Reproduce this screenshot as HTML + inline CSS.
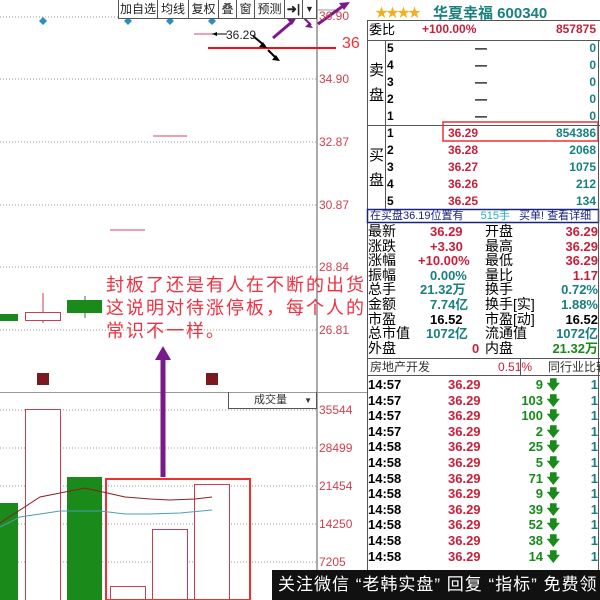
<!DOCTYPE html>
<html><head><meta charset="utf-8"><style>
*{margin:0;padding:0;box-sizing:border-box}
body{width:600px;height:600px;background:#fff;position:relative;overflow:hidden;font-family:"Liberation Sans","Noto Sans CJK SC",sans-serif}
.a{position:absolute;white-space:nowrap}
.btn{position:absolute;top:0;height:19px;border:1px solid #555;border-top:none;font-size:12px;line-height:18px;text-align:center;background:#fff;color:#222}
.r{color:#c8203a}.t{color:#18807f}.g{color:#1a8a1a}.k{color:#000}
.row{position:absolute;left:367px;width:233px;height:17px;font-size:12px;font-weight:bold;line-height:17px}
.st{position:absolute;left:368px;width:230px;height:14.6px;font-size:14px;line-height:15px}
.tk{position:absolute;left:368px;width:232px;height:15.6px;font-size:13px;font-weight:bold;line-height:15px}
</style></head><body>
<svg class="a" style="left:0;top:0" width="600" height="600">
<g stroke="#999" stroke-dasharray="1,2" stroke-width="1">
<line x1="0" y1="17" x2="317" y2="17"/><line x1="0" y1="79" x2="317" y2="79"/><line x1="0" y1="142" x2="317" y2="142"/><line x1="0" y1="205" x2="317" y2="205"/><line x1="0" y1="267" x2="317" y2="267"/><line x1="0" y1="330" x2="317" y2="330"/>
<line x1="0" y1="410" x2="317" y2="410"/><line x1="0" y1="448" x2="317" y2="448"/><line x1="0" y1="486" x2="317" y2="486"/><line x1="0" y1="524" x2="317" y2="524"/><line x1="0" y1="562" x2="317" y2="562"/>
</g>
<line x1="317" y1="0" x2="317" y2="600" stroke="#555"/>
<line x1="0" y1="392.5" x2="367" y2="392.5" stroke="#999"/>
<line x1="318" y1="10" x2="335" y2="10" stroke="#999"/>
<g fill="#2a8fc0"><path d="M43 17l4 4-4 4-4-4z"/><path d="M128 17l4 4-4 4-4-4z"/><path d="M170 17l4 4-4 4-4-4z"/><path d="M212 17l4 4-4 4-4-4z"/></g>
<line x1="194" y1="34" x2="212" y2="34" stroke="#e04060"/>
<line x1="208" y1="48" x2="336" y2="48" stroke="#f01010" stroke-width="2"/>
<line x1="153" y1="136" x2="187" y2="136" stroke="#e04060"/>
<line x1="110" y1="230" x2="145" y2="230" stroke="#e04060"/>
<path d="M212 34h15" stroke="#000"/><path d="M212 34l5-2v4z" fill="#000"/>
<path d="M253 36l12 10" stroke="#000" stroke-width="2"/><path d="M267 48l-8-1 4-5z" fill="#000"/>
<path d="M268 50l8 8" stroke="#000" stroke-width="2"/><path d="M280 61l-8-1 4-5z" fill="#000"/>
<path d="M273 38l20-17" stroke="#7a1a8a" stroke-width="3"/><path d="M297 17l-10 2 5 6z" fill="#7a1a8a"/>
<path d="M303 17l8 8" stroke="#7a1a8a" stroke-width="2"/><path d="M313 28l-8-1 4-4z" fill="#7a1a8a"/>
<path d="M318 24l25-18" stroke="#7a1a8a" stroke-width="3"/><path d="M350 2l-11 1 5 7z" fill="#7a1a8a"/>
<rect x="0" y="314" width="18" height="7" fill="#1a8a1a"/>
<line x1="43" y1="293" x2="43" y2="323" stroke="#c84050"/><rect x="25.5" y="312.5" width="35" height="8" fill="#fff" stroke="#c84050"/>
<line x1="85" y1="296" x2="85" y2="318" stroke="#1a8a1a"/><rect x="67" y="300" width="35" height="13" fill="#1a8a1a"/>
<rect x="37" y="373" width="12" height="12" fill="#7a1a20"/><rect x="206" y="373" width="12" height="12" fill="#7a1a20"/>
<rect x="0" y="503" width="18" height="97" fill="#1a8a1a"/>
<rect x="25.5" y="409.5" width="35" height="191" fill="#fff" stroke="#c84050"/>
<rect x="67" y="477" width="35" height="123" fill="#1a8a1a"/>
<rect x="110.5" y="586.5" width="35" height="14" fill="#fff" stroke="#c84050"/>
<rect x="152.5" y="529.5" width="35" height="71" fill="#fff" stroke="#c84050"/>
<rect x="194.5" y="484.5" width="35" height="116" fill="#fff" stroke="#c84050"/>
<rect x="106" y="479" width="144" height="121" fill="none" stroke="#f03030" stroke-width="2"/>
<path d="M0 523 L40 497 L85 488 L125 497 L150 499 L170 500 L195 499 L212 497" fill="none" stroke="#8a2020"/>
<path d="M0 527 L20 517 L60 511 L100 511 L125 514 L150 514 L180 513 L212 510" fill="none" stroke="#4aa0b0"/>
<path d="M163 477 L163 352" stroke="#7a1a8a" stroke-width="5"/><path d="M155 360 L163 346 L171 360z" fill="#7a1a8a"/>
<line x1="367.5" y1="20" x2="367.5" y2="600" stroke="#555"/>
<line x1="367" y1="20.5" x2="600" y2="20.5" stroke="#555"/>
<line x1="367" y1="40.5" x2="600" y2="40.5" stroke="#555"/>
<line x1="385.5" y1="40" x2="385.5" y2="210" stroke="#555"/>
<line x1="367" y1="125.5" x2="600" y2="125.5" stroke="#555"/>
<rect x="367.5" y="209.5" width="231" height="13" fill="none" stroke="#1a237e" stroke-width="1.5"/>
<line x1="367" y1="358.5" x2="600" y2="358.5" stroke="#555"/>
<line x1="367" y1="375.5" x2="600" y2="375.5" stroke="#555"/>
<line x1="520.5" y1="358" x2="520.5" y2="375" stroke="#555"/>
<rect x="443" y="122" width="155" height="19" fill="none" stroke="#f03030" stroke-width="1.5"/>
<line x1="598.5" y1="40" x2="598.5" y2="600" stroke="#555"/>
</svg>
<div class="btn" style="left:118px;width:40px">加自选</div>
<div class="btn" style="left:157px;width:32px">均线</div>
<div class="btn" style="left:188px;width:31px">复权</div>
<div class="btn" style="left:218px;width:19px">叠</div>
<div class="btn" style="left:236px;width:19px">窗</div>
<div class="btn" style="left:254px;width:31px">预测</div>
<div class="btn" style="left:284px;width:19px;font-weight:bold">➜|</div>
<div class="btn" style="left:302px;width:15px;font-size:9px">▼</div>
<div class="a" style="left:226px;top:28px;font-size:12px;color:#222">36.29</div>
<div class="a" style="left:342px;top:35px;font-size:16px;color:#f03030">36</div>
<div class="a" style="left:319px;top:9px;font-size:12px;color:#d04050">36.90</div>
<div class="a" style="left:319px;top:72px;font-size:12px;color:#d04050">34.90</div>
<div class="a" style="left:319px;top:135px;font-size:12px;color:#d04050">32.87</div>
<div class="a" style="left:319px;top:198px;font-size:12px;color:#d04050">30.87</div>
<div class="a" style="left:319px;top:260px;font-size:12px;color:#d04050">28.84</div>
<div class="a" style="left:319px;top:323px;font-size:12px;color:#d04050">26.81</div>
<div class="a" style="left:319px;top:403px;font-size:12px;color:#d04050">35544</div>
<div class="a" style="left:319px;top:441px;font-size:12px;color:#d04050">28499</div>
<div class="a" style="left:319px;top:479px;font-size:12px;color:#d04050">21454</div>
<div class="a" style="left:319px;top:517px;font-size:12px;color:#d04050">14250</div>
<div class="a" style="left:319px;top:555px;font-size:12px;color:#d04050">7205</div>
<div class="a" style="left:228px;top:392px;width:89px;height:17px;border:1px solid #555;border-top:none;font-size:11px;line-height:16px;padding-left:25px;color:#333">成交量 <span style="font-size:8px;margin-left:14px">▼</span></div>
<div class="a" style="left:106px;top:274px;font-size:18px;letter-spacing:2px;line-height:23px;color:#f03040">封板了还是有人在不断的出货<br>这说明对待涨停板，每个人的<br>常识不一样。</div>
<div class="a" style="left:375px;top:2px;font-size:13px;color:#f0b020;letter-spacing:-2px">★★★★</div>
<div class="a" style="left:433px;top:2px;font-size:15px;font-weight:bold;color:#18807f">华夏幸福 600340</div>
<div class="row" style="top:21px;font-size:13px;font-weight:normal;padding-left:2px">委比<span class="a r" style="left:55px;font-weight:bold;font-size:12px">+100.00%</span><span class="a r" style="right:4px;font-weight:bold;font-size:12px">857875</span></div>
<div class="a" style="left:369px;top:58px;font-size:15px;line-height:25px">卖<br>盘</div>
<div class="a" style="left:369px;top:143px;font-size:15px;line-height:25px">买<br>盘</div>
<div class="row" style="top:40px"><span class="a" style="left:20px">5</span><span class="a" style="left:108px">—</span><span class="a t" style="right:4px">0</span></div>
<div class="row" style="top:57px"><span class="a" style="left:20px">4</span><span class="a" style="left:108px">—</span><span class="a t" style="right:4px">0</span></div>
<div class="row" style="top:74px"><span class="a" style="left:20px">3</span><span class="a" style="left:108px">—</span><span class="a t" style="right:4px">0</span></div>
<div class="row" style="top:91px"><span class="a" style="left:20px">2</span><span class="a" style="left:108px">—</span><span class="a t" style="right:4px">0</span></div>
<div class="row" style="top:108px"><span class="a" style="left:20px">1</span><span class="a" style="left:108px">—</span><span class="a t" style="right:4px">0</span></div>
<div class="row" style="top:125px"><span class="a" style="left:20px">1</span><span class="a r" style="left:81px">36.29</span><span class="a t" style="right:4px">854386</span></div>
<div class="row" style="top:142px"><span class="a" style="left:20px">2</span><span class="a r" style="left:81px">36.28</span><span class="a t" style="right:4px">2068</span></div>
<div class="row" style="top:159px"><span class="a" style="left:20px">3</span><span class="a r" style="left:81px">36.27</span><span class="a t" style="right:4px">1075</span></div>
<div class="row" style="top:176px"><span class="a" style="left:20px">4</span><span class="a r" style="left:81px">36.26</span><span class="a t" style="right:4px">212</span></div>
<div class="row" style="top:193px"><span class="a" style="left:20px">5</span><span class="a r" style="left:81px">36.25</span><span class="a t" style="right:4px">134</span></div>
<div class="a" style="left:370px;top:210px;font-size:11px;line-height:13px;color:#1a237e">在买盘36.19位置有 <span style="color:#20b0c0;margin-left:14px">515手</span> <span style="margin-left:6px">买单! 查看详细</span></div>
<div class="st" style="top:224px">最新<span class="a r" style="left:62px;font-weight:bold;font-size:13px">36.29</span><span class="a" style="left:117px">开盘</span><span class="a r" style="right:0;font-weight:bold;font-size:13px">36.29</span></div>
<div class="st" style="top:238.6px">涨跌<span class="a r" style="left:62px;font-weight:bold;font-size:13px">+3.30</span><span class="a" style="left:117px">最高</span><span class="a r" style="right:0;font-weight:bold;font-size:13px">36.29</span></div>
<div class="st" style="top:253.2px">涨幅<span class="a r" style="left:50px;font-weight:bold;font-size:13px">+10.00%</span><span class="a" style="left:117px">最低</span><span class="a r" style="right:0;font-weight:bold;font-size:13px">36.29</span></div>
<div class="st" style="top:267.8px">振幅<span class="a t" style="left:62px;font-weight:bold;font-size:13px">0.00%</span><span class="a" style="left:117px">量比</span><span class="a r" style="right:0;font-weight:bold;font-size:13px">1.17</span></div>
<div class="st" style="top:282.4px">总手<span class="a t" style="left:52px;font-weight:bold;font-size:13px">21.32万</span><span class="a" style="left:117px">换手</span><span class="a t" style="right:0;font-weight:bold;font-size:13px">0.72%</span></div>
<div class="st" style="top:297px">金额<span class="a t" style="left:62px;font-weight:bold;font-size:13px">7.74亿</span><span class="a" style="left:117px">换手[实]</span><span class="a t" style="right:0;font-weight:bold;font-size:13px">1.88%</span></div>
<div class="st" style="top:311.6px">市盈<span class="a k" style="left:62px;font-weight:bold;font-size:13px">16.52</span><span class="a" style="left:117px">市盈[动]</span><span class="a k" style="right:0;font-weight:bold;font-size:13px">16.52</span></div>
<div class="st" style="top:326.2px">总市值<span class="a t" style="left:58px;font-weight:bold;font-size:13px">1072亿</span><span class="a" style="left:117px">流通值</span><span class="a t" style="right:0;font-weight:bold;font-size:13px">1072亿</span></div>
<div class="st" style="top:340.8px">外盘<span class="a r" style="left:104px;font-weight:bold;font-size:13px">0</span><span class="a" style="left:117px">内盘</span><span class="a g" style="right:0;font-weight:bold;font-size:13px">21.32万</span></div>
<div class="a" style="left:370px;top:359px;font-size:12px;line-height:16px;color:#333">房地产开发<span class="r" style="margin-left:68px">0.51%</span><span style="margin-left:16px">同行业比较</span></div>
<div class="tk" style="top:377px">14:57<span class="a r" style="left:80px">36.29</span><span class="a g" style="right:40px">9 🡇</span><span class="a t" style="right:2px">1</span></div>
<div class="tk" style="top:392.6px">14:57<span class="a r" style="left:80px">36.29</span><span class="a g" style="right:40px">103 🡇</span><span class="a t" style="right:2px">1</span></div>
<div class="tk" style="top:408.2px">14:57<span class="a r" style="left:80px">36.29</span><span class="a g" style="right:40px">100 🡇</span><span class="a t" style="right:2px">1</span></div>
<div class="tk" style="top:423.8px">14:57<span class="a r" style="left:80px">36.29</span><span class="a g" style="right:40px">2 🡇</span><span class="a t" style="right:2px">1</span></div>
<div class="tk" style="top:439.4px">14:58<span class="a r" style="left:80px">36.29</span><span class="a g" style="right:40px">25 🡇</span><span class="a t" style="right:2px">1</span></div>
<div class="tk" style="top:455px">14:58<span class="a r" style="left:80px">36.29</span><span class="a g" style="right:40px">5 🡇</span><span class="a t" style="right:2px">1</span></div>
<div class="tk" style="top:470.6px">14:58<span class="a r" style="left:80px">36.29</span><span class="a g" style="right:40px">71 🡇</span><span class="a t" style="right:2px">1</span></div>
<div class="tk" style="top:486.2px">14:58<span class="a r" style="left:80px">36.29</span><span class="a g" style="right:40px">9 🡇</span><span class="a t" style="right:2px">1</span></div>
<div class="tk" style="top:501.8px">14:58<span class="a r" style="left:80px">36.29</span><span class="a g" style="right:40px">39 🡇</span><span class="a t" style="right:2px">1</span></div>
<div class="tk" style="top:517.4px">14:58<span class="a r" style="left:80px">36.29</span><span class="a g" style="right:40px">52 🡇</span><span class="a t" style="right:2px">1</span></div>
<div class="tk" style="top:533px">14:58<span class="a r" style="left:80px">36.29</span><span class="a g" style="right:40px">38 🡇</span><span class="a t" style="right:2px">1</span></div>
<div class="tk" style="top:548.6px">14:58<span class="a r" style="left:80px">36.29</span><span class="a g" style="right:40px">14 🡇</span><span class="a t" style="right:2px">1</span></div>
<div class="a" style="left:272px;top:570px;width:328px;height:30px;background:#111;color:#fff;font-size:17px;letter-spacing:1px;line-height:30px;padding-left:6px">关注微信 “老韩实盘” 回复 “指标” 免费领</div>
</body></html>
